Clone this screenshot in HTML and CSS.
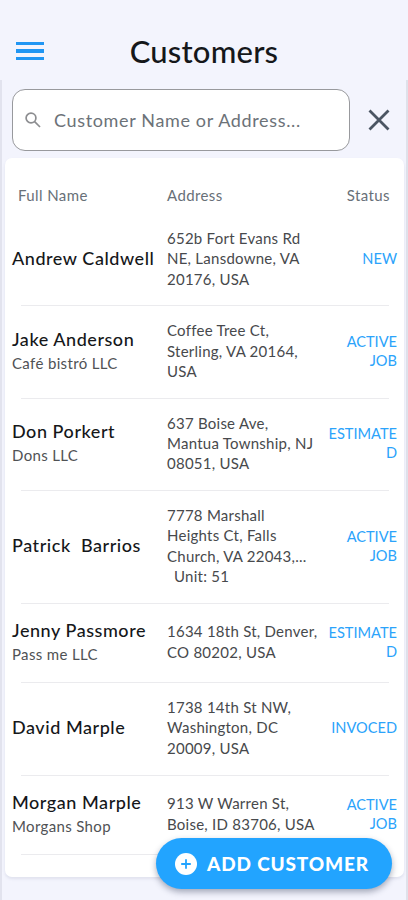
FILE: index.html
```html
<!DOCTYPE html>
<html lang="en">
<head>
    <meta charset="UTF-8">
    <meta name="viewport" content="width=device-width, initial-scale=1.0">
    <title>Customers</title>
    <link rel="stylesheet" href="styles.css">
</head>
<body>
    <header class="topbar">
        <button class="menu-btn" aria-label="Menu">
            <span></span>
            <span></span>
            <span></span>
        </button>
        <h1>Customers</h1>
    </header>

    <main class="page">
        <div class="search-row">
            <div class="search-box">
                <svg class="search-icon" viewBox="0 0 16 16">
                    <circle cx="6" cy="6" r="4.9"/>
                    <path d="M9.6 9.6L15 15"/>
                </svg>
                <span>Customer Name or Address...</span>
            </div>
            <svg class="close-icon" viewBox="0 0 22 22">
                <path d="M1.5 1.5L20.5 20.5M20.5 1.5L1.5 20.5"/>
            </svg>
        </div>

        <section class="card">
            <div class="row head">
                <div>Full Name</div>
                <div>Address</div>
                <div>Status</div>
            </div>

            <div class="row">
                <div class="customer"><div class="name">Andrew Caldwell</div></div>
                <div class="address">652b Fort Evans Rd<br>NE, Lansdowne, VA<br>20176, USA</div>
                <div class="status">NEW</div>
            </div>

            <div class="row">
                <div class="customer">
                    <div class="name">Jake Anderson</div>
                    <div class="company">Café bistró LLC</div>
                </div>
                <div class="address">Coffee Tree Ct,<br>Sterling, VA 20164,<br>USA</div>
                <div class="status">ACTIVE<br>JOB</div>
            </div>

            <div class="row">
                <div class="customer">
                    <div class="name">Don Porkert</div>
                    <div class="company">Dons LLC</div>
                </div>
                <div class="address">637 Boise Ave,<br>Mantua Township, NJ<br>08051, USA</div>
                <div class="status">ESTIMATE<br>D</div>
            </div>

            <div class="row">
                <div class="customer"><div class="name">Patrick&nbsp; Barrios</div></div>
                <div class="address">7778 Marshall<br>Heights Ct, Falls<br>Church, VA 22043,...<br><span class="unit">Unit: 51</span></div>
                <div class="status">ACTIVE<br>JOB</div>
            </div>

            <div class="row">
                <div class="customer">
                    <div class="name">Jenny Passmore</div>
                    <div class="company">Pass me LLC</div>
                </div>
                <div class="address">1634 18th St, Denver,<br>CO 80202, USA</div>
                <div class="status">ESTIMATE<br>D</div>
            </div>

            <div class="row">
                <div class="customer"><div class="name">David Marple</div></div>
                <div class="address">1738 14th St NW,<br>Washington, DC<br>20009, USA</div>
                <div class="status">INVOCED</div>
            </div>

            <div class="row">
                <div class="customer">
                    <div class="name">Morgan Marple</div>
                    <div class="company">Morgans Shop</div>
                </div>
                <div class="address">913 W Warren St,<br>Boise, ID 83706, USA</div>
                <div class="status">ACTIVE<br>JOB</div>
            </div>
        </section>
    </main>

    <button class="add-btn">
        <svg viewBox="0 0 22 22">
            <circle cx="11" cy="11" r="11"/>
            <path d="M11 6.2V15.8M6.2 11H15.8"/>
        </svg>
        <span>ADD CUSTOMER</span>
    </button>
</body>
</html>
```

FILE: styles.css
```css
* {
    box-sizing: border-box;
}
body {
    margin: 0;
    height: 900px;
    overflow: hidden;
    background-color: #f3f4fd;
    color: #15171a;
    font-family: Lato, sans-serif;
}
.topbar {
    display: grid;
    grid-template-columns: 44px 1fr 44px;
    align-items: center;
    height: 80px;
    padding-top: 22px;
}
.menu-btn {
    display: flex;
    flex-direction: column;
    gap: 4px;
    width: 28px;
    margin-left: 16px;
    padding: 0;
    border: 0;
    background: none;
}
.menu-btn span {
    height: 3.4px;
    background-color: #2196f3;
}
h1 {
    margin: 0;
    text-align: center;
    font-size: 31px;
    font-weight: 500;
    line-height: 40px;
    letter-spacing: 0.2px;
}
.page {
    height: 820px;
    padding: 9px 2px 0 3px;
    border-left: 2px solid #e2e3ee;
    border-right: 2px solid #dfe1ea;
}
.search-row {
    display: flex;
    align-items: center;
    padding: 0 13px 0 7px;
}
.search-box {
    display: flex;
    align-items: center;
    width: 338px;
    height: 62px;
    padding-left: 12px;
    border: 1.5px solid #98999d;
    border-radius: 13px;
    background-color: #fff;
    color: #6c7278;
    font-size: 18px;
    letter-spacing: 0.65px;
}
.search-icon {
    width: 16px;
    height: 16px;
    margin-right: 13px;
    fill: none;
    stroke: #8c8d90;
    stroke-width: 1.7;
}
.close-icon {
    width: 22px;
    height: 22px;
    margin-left: 18px;
    fill: none;
    stroke: #4b5563;
    stroke-width: 2.8;
}
.card {
    height: 719px;
    margin-top: 7px;
    border-radius: 7px;
    background-color: #fff;
    box-shadow: 0 2px 3px rgba(90, 95, 130, 0.12);
}
.row {
    display: grid;
    grid-template-columns: 155px 158px 72px;
    align-items: center;
    position: relative;
    padding: 14px 7px 17.6px;
}
.row:not(.head)::after {
    content: "";
    position: absolute;
    left: 16px;
    right: 15px;
    bottom: 0;
    height: 1px;
    background-color: #ebebee;
}
.head {
    height: 56px;
    padding: 17px 14px 0 13px;
    grid-template-columns: 149px 1fr auto;
    color: #687078;
    font-size: 15px;
    letter-spacing: 0.4px;
}
.name {
    font-size: 18px;
    font-weight: 500;
    line-height: 25px;
    letter-spacing: 0.55px;
    white-space: nowrap;
}
.company {
    color: #505255;
    font-size: 15px;
    line-height: 23px;
    letter-spacing: 0.35px;
}
.address {
    color: #47494c;
    font-size: 15px;
    line-height: 20.25px;
    letter-spacing: 0.25px;
    white-space: nowrap;
}
.unit {
    margin-left: 7px;
}
.status {
    color: #2ba3fb;
    font-size: 14.6px;
    line-height: 19px;
    text-align: right;
}
.add-btn {
    display: flex;
    align-items: center;
    position: absolute;
    left: 156px;
    top: 838px;
    width: 236px;
    height: 51px;
    padding: 0 0 0 19px;
    border: 0;
    border-radius: 26px;
    background-color: #22a4ff;
    box-shadow: 0 3px 6px rgba(40, 50, 80, 0.4);
    color: #fff;
    font-family: inherit;
    font-size: 19px;
    font-weight: 900;
    letter-spacing: 0.85px;
    white-space: nowrap;
}
.add-btn svg {
    width: 22px;
    height: 22px;
    margin-right: 10px;
    fill: #fff;
    stroke: #22a4ff;
    stroke-width: 1.8;
}
.add-btn circle {
    stroke: none;
}
```
